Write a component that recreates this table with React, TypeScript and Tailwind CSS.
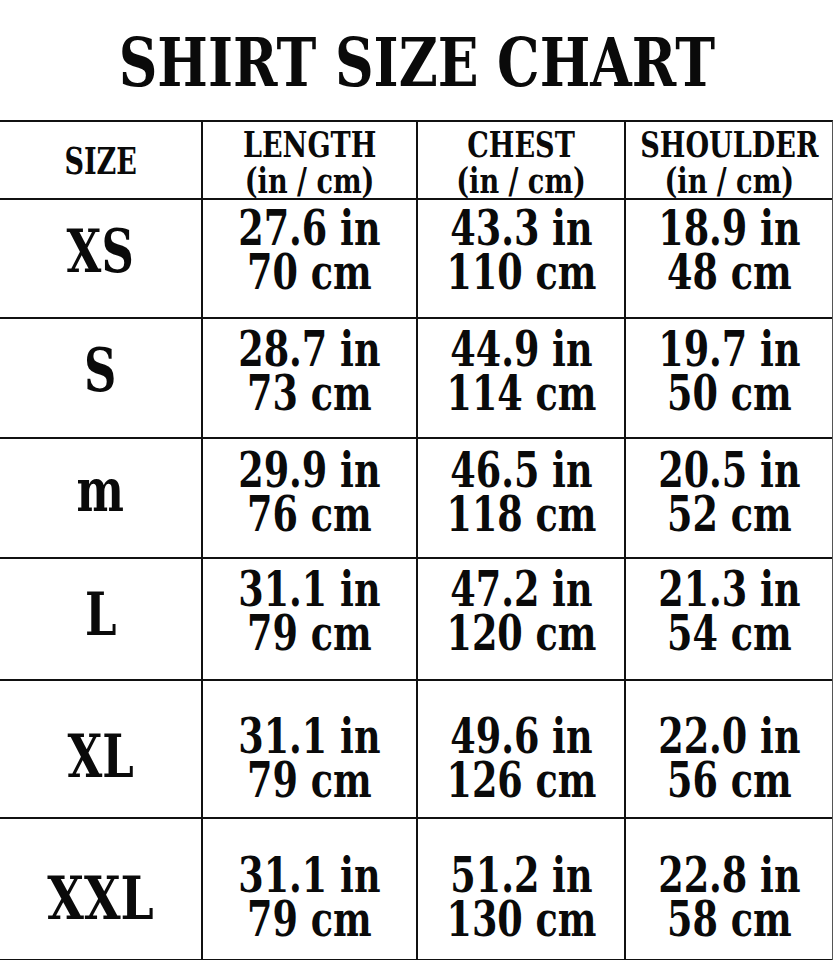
import React from "react";

type Row = {
  size: string;
  h: string;
  pad: string;
  labelPad: string;
  labelScale: string;
  vals: [string, string][];
};

const rows: Row[] = [
  { size: "XS", h: "h-[119px]", pad: "pt-[6px]", labelPad: "pt-[22px]", labelScale: "scale-x-[0.76]", vals: [["27.6 in", "70 cm"], ["43.3 in", "110 cm"], ["18.9 in", "48 cm"]] },
  { size: "S", h: "h-[120px]", pad: "pt-[8px]", labelPad: "pt-[22px]", labelScale: "scale-x-[0.76]", vals: [["28.7 in", "73 cm"], ["44.9 in", "114 cm"], ["19.7 in", "50 cm"]] },
  { size: "m", h: "h-[120px]", pad: "pt-[9px]", labelPad: "pt-[22px]", labelScale: "scale-x-[0.76]", vals: [["29.9 in", "76 cm"], ["46.5 in", "118 cm"], ["20.5 in", "52 cm"]] },
  { size: "L", h: "h-[122px]", pad: "pt-[8px]", labelPad: "pt-[26px]", labelScale: "scale-x-[0.76]", vals: [["31.1 in", "79 cm"], ["47.2 in", "120 cm"], ["21.3 in", "54 cm"]] },
  { size: "XL", h: "h-[138px]", pad: "pt-[33px]", labelPad: "pt-[46px]", labelScale: "scale-x-[0.76]", vals: [["31.1 in", "79 cm"], ["49.6 in", "126 cm"], ["22.0 in", "56 cm"]] },
  { size: "XXL", h: "h-[142px]", pad: "pt-[34px]", labelPad: "pt-[50px]", labelScale: "scale-x-[0.8]", vals: [["31.1 in", "79 cm"], ["51.2 in", "130 cm"], ["22.8 in", "58 cm"]] },
];

const font = "font-['DejaVu_Serif',serif] font-bold text-[#0a0a0a]";
const cols = "grid grid-cols-[201px_215px_208px_209px]";

export default function App() {
  return (
    <div className={`w-[833px] h-[960px] overflow-hidden bg-white ${font}`}>
      <div className="h-[120px] flex items-start justify-center pt-[22px]">
        <span className="inline-block scale-x-[0.787] text-[68px] leading-[80px] whitespace-nowrap">SHIRT SIZE CHART</span>
      </div>
      <div className="border-t-2 border-r border-t-[#111] border-r-[#555]">
        <div className={`${cols} h-[78px] border-b-2 border-[#111]`}>
          <div className="flex items-center justify-center pt-[2px] min-w-0">
            <span className="inline-block scale-x-[0.73] text-[37px] leading-[40px]">SIZE</span>
          </div>
          {["LENGTH", "CHEST", "SHOULDER"].map((t) => (
            <div key={t} className="border-l-2 border-[#111] flex justify-center pt-[4px] min-w-0">
              <span className="inline-block scale-x-[0.753] text-[36px] leading-[36px] whitespace-nowrap text-center">
                {t}
                <br />
                (in / cm)
              </span>
            </div>
          ))}
        </div>
        {rows.map((r) => (
          <div key={r.size} className={`${cols} ${r.h} border-b-2 border-[#111]`}>
            <div className={`flex justify-center min-w-0 ${r.labelPad}`}>
              <span className={`inline-block ${r.labelScale} text-[59px] leading-[60px]`}>{r.size}</span>
            </div>
            {r.vals.map((v, i) => (
              <div key={i} className={`border-l-2 border-[#111] flex justify-center min-w-0 ${r.pad}`}>
                <span className="inline-block scale-x-[0.762] text-[48px] leading-[44px] whitespace-nowrap text-center">
                  {v[0]}
                  <br />
                  {v[1]}
                </span>
              </div>
            ))}
          </div>
        ))}
      </div>
    </div>
  );
}
